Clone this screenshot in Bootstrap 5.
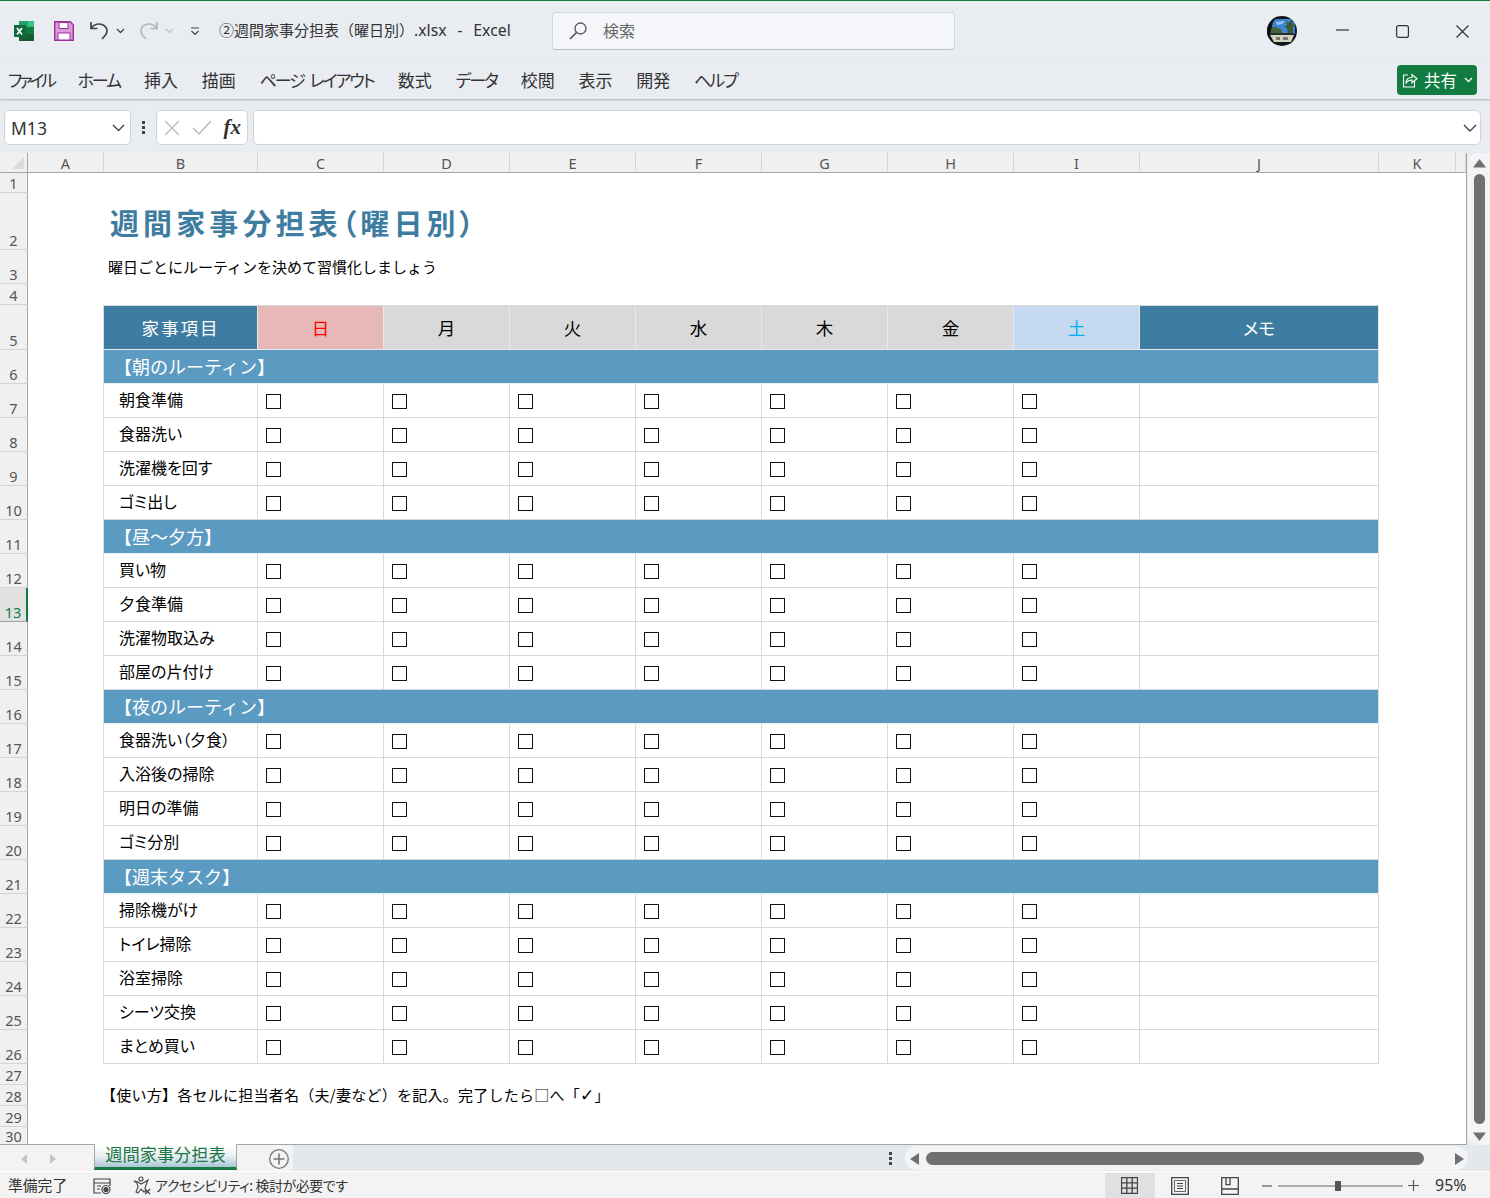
<!DOCTYPE html>
<html lang="ja">
<head>
<meta charset="utf-8">
<title>週間家事分担表</title>
<link href="https://cdn.jsdelivr.net/npm/bootstrap@5.3.0/dist/css/bootstrap.min.css" rel="stylesheet">
<style>
html,body{margin:0;height:100%;overflow:hidden;background:#e9ecf1}
body{font-family:"Noto Sans CJK JP","Noto Sans",sans-serif;color:#222;font-feature-settings:"palt"}
.xl-app{width:1490px;height:1198px;overflow:hidden}
.xl-titlebar{height:61px;border-top:1px solid #107c41;background:#e9ecf1;flex:none}
.xl-qat{width:520px;padding-left:14px}
.xl-save{margin-left:20px}
.xl-undo{margin-left:15px}
.xl-chev{margin-left:6px}
.xl-redo{margin-left:13px}
.xl-cust{margin-left:16px}
.xl-docname{font-size:15px;margin-left:19px;color:#333;white-space:pre;font-feature-settings:normal}
.xl-latin{font-family:"Noto Sans",sans-serif;font-size:15.8px;word-spacing:1.3px}
.xl-search{position:absolute;left:552px;top:11px;width:403px;height:38px;background:#f5f6f9;border:1px solid #d4d7dc;border-bottom-color:#bcbfc4;border-radius:4px;padding-left:15px;color:#666;font-size:16px}
.xl-search span{margin-left:15px;margin-bottom:2px}
.xl-avatar{position:absolute;left:1267px;top:15px}
.xl-winbtn{position:absolute;top:24px}
.xl-min{left:1336px}.xl-max{left:1396px}.xl-close{left:1456px}
.xl-ribbon{height:38px;background:#e9ecf1;box-shadow:0 1px 2px rgba(0,0,0,.25);position:relative;z-index:2;flex:none;padding:0 0 0 8px;font-size:17px;color:#333;gap:23.8px}
.xl-k1{letter-spacing:-3.3px}
.xl-k2{letter-spacing:-2px;word-spacing:4px}
.xl-share{position:absolute;left:1397px;top:4px;width:80px;height:30px;background:#107c41;color:#fff;border-radius:4px;border:0;font-size:16.5px;padding:0 0 0 5px}
.xl-share span{margin:0 7px 0 6px}
.xl-fbar{height:54px;background:#e9ecf1;flex:none;padding:11px 9px 8px 4px}
.xl-box{background:#fff;border:1px solid #d2d4d8;border-radius:5px;height:35px}
.xl-name{width:127px;padding:0 5px 0 6px;font-family:"Noto Sans",sans-serif;font-size:17.5px;color:#333}
.xl-name span{margin-top:2px}
.xl-dots{width:25px}
.xl-fxbox{width:92px;padding:0 6px 0 7px;margin-right:5px}
.xl-okmark{margin-left:12px}
.xl-fx{font-family:"Liberation Serif",serif;font-style:italic;font-weight:700;font-size:21px;color:#333;margin-left:auto}
.xl-finput{flex:1;padding-right:3px}
.xl-main{height:992px;flex:none;position:relative}
.xl-sheetwrap{width:1467px;height:992px;overflow:hidden;border-right:1px solid #a6a6a6;border-bottom:1px solid #a6a6a6;background:#fff}
.xl-sheet{table-layout:fixed;width:1466px;border-collapse:separate;border-spacing:0;color:#000}
.xl-sheet col{width:126px}
.xl-sheet col:nth-child(1){width:28px}
.xl-sheet col:nth-child(2){width:76px}
.xl-sheet col:nth-child(3){width:154px}
.xl-sheet col:nth-child(11){width:239px}
.xl-sheet col:nth-child(12){width:77px}
.xl-sheet col:nth-child(13){width:10px}
.xl-sheet th,.xl-sheet td{padding:0;box-sizing:border-box;font-weight:400;overflow:hidden;white-space:nowrap}
.xl-sheet .xl-ch{background:#f0f0f0;height:20px;border-bottom:1px solid #a6a6a6;border-right:1px solid #d4d4d4;text-align:center;font-family:"Noto Sans",sans-serif;font-size:14.5px;color:#555;line-height:18px;vertical-align:bottom;padding-top:1px}
.xl-rh{background:#f0f0f0;border-right:1px solid #a6a6a6;border-bottom:1px solid #d4d4d4;text-align:center;vertical-align:bottom;font-family:"Noto Sans",sans-serif;font-size:14.5px;color:#555;line-height:17px}
.xl-rh-on{background:#e1e1e1;color:#107c41;border-right:2px solid #107c41;border-bottom:1px solid #a6a6a6}
.xl-sheet .xl-rh-last{overflow:visible;padding-bottom:1px;line-height:16px;border-bottom:0}
.xl-corner{position:relative;border-right:1px solid #a6a6a6!important}
.xl-corner::after{content:"";position:absolute;right:3px;bottom:3px;border-left:12px solid transparent;border-bottom:12px solid #dcdcdc}
.xl-sheet .xl-h1{font-size:29px;font-weight:700;color:#3e7ca1;letter-spacing:4.1px;padding:0 0 6px 6px;line-height:44px;vertical-align:bottom}
.xl-sheet .xl-sub{font-size:15px;padding-left:4px;vertical-align:middle;font-feature-settings:normal}
.xl-edge{border-right:1px solid #d9d9d9}
.xl-sheet .xl-hd{text-align:center;font-size:17.5px;padding-top:1px;border-top:1px solid #d9d9d9;border-right:1px solid #e8e8e8;border-bottom:1px solid #e8e8e8;vertical-align:middle}
.xl-hd-main{background:#3e7ca1;color:#fff;letter-spacing:2px}
.xl-hd-sun{background:#e6b8b7;color:#f00}
.xl-hd-day{background:#d9d9d9}
.xl-hd-sat{background:#c5d9f1;color:#00b0f0}
.xl-hd-memo{background:#3e7ca1;color:#fff}
.xl-sheet .xl-sec{background:#5c9bc1;color:#fff;font-size:18px;padding-left:10px;border-right:1px solid #d9d9d9;border-bottom:1px solid #e8f0f5;font-feature-settings:normal}
.xl-sheet .xl-lab{font-size:16px;padding:0 0 3px 15px;border-right:1px solid #d9d9d9;border-bottom:1px solid #d9d9d9;vertical-align:middle}
.xl-sheet .xl-cell{border-right:1px solid #d9d9d9;border-bottom:1px solid #d9d9d9;padding-left:8px;vertical-align:middle}
.xl-tick{display:block;width:15px;height:15px;border:1.4px solid #111;margin-top:1px}
.xl-sheet .xl-note{font-size:15px;line-height:19px;letter-spacing:.25px;padding:0 0 2px 73px;vertical-align:middle;font-feature-settings:normal}
.xl-ok{font-family:"DejaVu Sans",sans-serif;font-weight:700;font-size:17px;line-height:15px}
.xl-vbar{position:absolute;left:1468px;top:0;width:22px;height:992px;background:#f3f4f6;border-radius:11px 0 0 11px}
.xl-vthumb{position:absolute;left:6px;top:21px;width:11px;height:950px;background:#707070;border-radius:6px}
.xl-tri{position:absolute}
.xl-t-up{left:5px;top:5px}.xl-t-dn{left:5px;top:979px}
.xl-tabbar{height:27px;flex:none;background:#e2e8ec;position:relative;border-bottom:1px solid #fff}
.xl-tableft{position:absolute;left:0;top:0;width:293px;height:26px;background:#f3f3f3}
.xl-t-l{left:21px;top:9px}.xl-t-r{left:50px;top:9px}.xl-t-add{left:269px;top:4px}
.xl-t-dots{left:889px;top:7px}
.xl-tab{position:absolute;left:94px;top:-1px;width:143px;height:26px;border-left:1px solid #a6a6a6;border-right:1px solid #a6a6a6;border-bottom:3px solid #1d7745;background:linear-gradient(#fff 10%,#e6eef2 55%,#a9c6d6);color:#1d7745;font-size:17.2px;line-height:19px;text-align:center;z-index:3}
.xl-hpill{position:absolute;left:905px;top:1px;width:563px;height:24px;background:#f3f4f6;border-radius:12px}
.xl-hthumb{position:absolute;left:21px;top:6px;width:498px;height:13px;background:#707070;border-radius:7px}
.xl-t-hl{left:5px;top:7px}.xl-t-hr{left:550px;top:7px}
.xl-status{height:26px;flex:none;background:#f3f3f3;position:relative;font-size:14.8px;color:#333}
.xl-status>*{position:absolute}
.xl-st-ready{left:8px;top:2px}
.xl-st-macro{left:93px;top:6px}
.xl-st-acc{left:133px;top:4px}
.xl-st-acct{left:155px;top:3px;font-size:13.9px;letter-spacing:-.38px}
.xl-viewon{left:1105px;top:1px;width:50px;height:25px;background:#e0e0e0}
.xl-v1{left:1121px;top:5px}.xl-v2{left:1171px;top:5px}.xl-v3{left:1221px;top:5px}
.xl-zm{left:1262px;top:13px}.xl-zs{left:1278px;top:9px}.xl-zp{left:1408px;top:8px}
.xl-zpct{left:1435px;top:1px;font-family:"Noto Sans",sans-serif;font-size:16px}
</style>
</head>
<body>
<div class="xl-app d-flex flex-column">

  <header class="xl-titlebar d-flex align-items-center position-relative">
    <div class="xl-qat d-flex align-items-center">
      <svg width="20" height="20" viewBox="0 0 20 20"><rect x="5" y="0" width="15" height="6" fill="#33c481"/><rect x="5" y="0" width="9" height="6" fill="#21a366"/><rect x="5" y="6" width="15" height="7" fill="#107c41"/><rect x="5" y="13" width="15" height="7" fill="#185c37"/><rect x="0" y="4" width="12" height="12" rx="1" fill="#0c6b38"/><path d="M3 7l5 6.500M8 7l-5 6.500" stroke="#fff" stroke-width="1.700"/></svg>
      <svg class="xl-save" width="20" height="20" viewBox="0 0 20 20"><path d="M.7.700h15.500l3.100 3.100v15.500H.7z" fill="#dc9cd6" stroke="#9c2f9e" stroke-width="1.400"/><rect x="5" y="1.500" width="9" height="6" fill="#fff" stroke="#9c2f9e"/><rect x="4" y="12" width="12" height="7" fill="#fff" stroke="#9c2f9e"/></svg>
      <svg class="xl-undo" width="21" height="20" viewBox="0 0 21 20" fill="none" stroke="#444" stroke-width="1.700"><path d="M2 1v6.500h6.500M2.200 7.200C4 4.500 6.500 3 10 3c5 0 8 3.200 8 6.800 0 3.200-2 5.500-5 8"/></svg>
      <svg class="xl-chev" width="9" height="6" viewBox="0 0 9 6" fill="none" stroke="#444" stroke-width="1.300"><path d="M1 1l3.500 3.500L8 1"/></svg>
      <svg class="xl-redo" width="21" height="20" viewBox="0 0 21 20" fill="none" stroke="#b4b6ba" stroke-width="1.700"><path d="M19 1v6.500h-6.500M18.800 7.200C17 4.500 14.500 3 11 3 6 3 3 6.200 3 9.800c0 3.200 2 5.500 5 8"/></svg>
      <svg class="xl-chev" width="9" height="6" viewBox="0 0 9 6" fill="none" stroke="#c0c2c6" stroke-width="1.300"><path d="M1 1l3.500 3.500L8 1"/></svg>
      <svg class="xl-cust" width="10" height="9" viewBox="0 0 10 9" fill="none" stroke="#444" stroke-width="1.200"><path d="M1 1h8M1.500 4l3.500 3.500L8.500 4"/></svg>
      <span class="xl-docname">②週間家事分担表（曜日別）<span class="xl-latin">.xlsx  -  Excel</span></span>
    </div>
    <div class="xl-search d-flex align-items-center">
      <svg width="20" height="20" viewBox="0 0 20 20" fill="none" stroke="#555" stroke-width="1.300"><circle cx="12.500" cy="7.500" r="5.500"/><path d="M8.500 11.500L2 18" stroke-width="1.700"/></svg>
      <span>検索</span>
    </div>
    <svg class="xl-avatar" width="30" height="30" viewBox="0 0 30 30"><defs><clipPath id="av"><circle cx="15" cy="15" r="15"/></clipPath></defs><g clip-path="url(#av)"><rect width="30" height="30" fill="#10171a"/><path d="M4 3h24v15H4z" fill="#3a86d8"/><path d="M9 6l9-1-3 3-5 1z" fill="#9cc4ea"/><path d="M19 4l2 3 4-4 1 5 4 1-4 2v8h-5l-1-7-3-1 3-2z" fill="#3c5a3a"/><path d="M0 11h9l6 3v4H0z" fill="#46633f"/><path d="M3 17h24v2H3z" fill="#26302c"/><path d="M3 19h24l-3 7H7z" fill="#d5d1bf"/><path d="M9 21h4v3H9zM16 21h5v3h-5z" fill="#7c7a6c"/><path d="M0 0h11L6 6 3 18 0 24zM30 22l-3 8H20z" fill="#0c1012"/></g></svg>
    <svg class="xl-winbtn xl-min" width="13" height="12" viewBox="0 0 13 12"><path d="M0 5h13" stroke="#333" stroke-width="1.200"/></svg>
    <svg class="xl-winbtn xl-max" width="13" height="13" viewBox="0 0 13 13"><rect x=".6" y=".6" width="11.800" height="11.800" rx="2" fill="none" stroke="#333" stroke-width="1.200"/></svg>
    <svg class="xl-winbtn xl-close" width="13" height="13" viewBox="0 0 13 13"><path d="M.5.500l12 12M12.500.500l-12 12" stroke="#333" stroke-width="1.200"/></svg>
  </header>

  <nav class="xl-ribbon d-flex align-items-center">
    <span class="xl-k1">ファイル</span><span class="xl-k2">ホーム</span><span>挿入</span><span>描画</span><span class="xl-k2">ページ レイアウト</span><span>数式</span><span class="xl-k2">データ</span><span>校閲</span><span>表示</span><span>開発</span><span class="xl-k2">ヘルプ</span>
    <button class="xl-share d-flex align-items-center" type="button">
      <svg width="16" height="16" viewBox="0 0 16 16" fill="none" stroke="#fff" stroke-width="1.100"><path d="M6 3H1.500v12h11V9"/><path d="M4 11c0-4 3-5.500 6-5.500V2.500l5 4.300-5 4V8c-2.500 0-4.500.800-6 3z"/></svg>
      <span>共有</span>
      <svg width="9" height="6" viewBox="0 0 9 6" fill="none" stroke="#fff" stroke-width="1.300"><path d="M1 1l3.500 3.500L8 1"/></svg>
    </button>
  </nav>

  <div class="xl-fbar d-flex align-items-center">
    <div class="xl-box xl-name d-flex align-items-center justify-content-between"><span>M13</span>
      <svg width="13" height="8" viewBox="0 0 13 8" fill="none" stroke="#444" stroke-width="1.400"><path d="M1 1l5.500 5.500L12 1"/></svg></div>
    <div class="xl-dots d-flex flex-column align-items-center"><svg width="3" height="13" viewBox="0 0 3 13"><path d="M0 0h3v3H0zM0 5h3v3H0zM0 10h3v3H0z" fill="#444"/></svg></div>
    <div class="xl-box xl-fxbox d-flex align-items-center">
      <svg width="16" height="16" viewBox="0 0 16 16"><path d="M1 1l14 14M15 1L1 15" stroke="#b8b8b8" stroke-width="1.400"/></svg>
      <svg class="xl-okmark" width="20" height="16" viewBox="0 0 20 16" fill="none"><path d="M1 8l6 6L19 1" stroke="#b8b8b8" stroke-width="1.500"/></svg>
      <span class="xl-fx">fx</span>
    </div>
    <div class="xl-box xl-finput d-flex align-items-center justify-content-end"><svg width="14" height="8" viewBox="0 0 14 8" fill="none" stroke="#444" stroke-width="1.400"><path d="M1 1l6 6 6-6"/></svg></div>
  </div>

  <main class="xl-main">
    <div class="xl-sheetwrap"><table class="xl-sheet" id="sheet">
      <colgroup><col><col><col><col><col><col><col><col><col><col><col><col><col></colgroup>
      <tbody id="rows"></tbody>
    </table></div>
    <div class="xl-vbar">
      <svg class="xl-tri xl-t-up" width="13" height="10" viewBox="0 0 13 10"><path d="M6.500 1L13 9.500H0z" fill="#707070"/></svg>
      <div class="xl-vthumb"></div>
      <svg class="xl-tri xl-t-dn" width="13" height="10" viewBox="0 0 13 10"><path d="M6.500 9L13 .500H0z" fill="#707070"/></svg>
    </div>
  </main>

  <div class="xl-tabbar">
    <div class="xl-tableft">
      <svg class="xl-tri xl-t-l" width="6" height="10" viewBox="0 0 6 10"><path d="M6 0v10L0 5z" fill="#c4c4c4"/></svg>
      <svg class="xl-tri xl-t-r" width="6" height="10" viewBox="0 0 6 10"><path d="M0 0v10l6-5z" fill="#c4c4c4"/></svg>
      <svg class="xl-tri xl-t-add" width="20" height="20" viewBox="0 0 20 20" fill="none" stroke="#777" stroke-width="1.300"><circle cx="10" cy="10" r="9.300"/><path d="M10 4.500v11M4.500 10h11" stroke-width="1.600"/></svg>
    </div>
    <div class="xl-tab">週間家事分担表</div>
    <svg class="xl-tri xl-t-dots" width="3" height="13" viewBox="0 0 3 13"><path d="M0 0h3v3H0zM0 5h3v3H0zM0 10h3v3H0z" fill="#444"/></svg>
    <div class="xl-hpill">
      <svg class="xl-tri xl-t-hl" width="9" height="12" viewBox="0 0 9 12"><path d="M9 0v12L0 6z" fill="#707070"/></svg>
      <div class="xl-hthumb"></div>
      <svg class="xl-tri xl-t-hr" width="9" height="12" viewBox="0 0 9 12"><path d="M0 0v12l9-6z" fill="#707070"/></svg>
    </div>
  </div>

  <footer class="xl-status">
    <span class="xl-st-ready">準備完了</span>
    <svg class="xl-st-macro" width="18" height="16" viewBox="0 0 18 16" fill="none" stroke="#444" stroke-width="1.200"><path d="M8 15H1V1h16v7M1 5h16M4 8h4M4 11h3"/><circle cx="13" cy="11.500" r="4" fill="#f3f3f3"/><circle cx="13" cy="11.500" r="2" fill="#444"/></svg>
    <svg class="xl-st-acc" width="19" height="19" viewBox="0 0 19 19" fill="none" stroke="#444" stroke-width="1.100"><circle cx="8" cy="3" r="2"/><path d="M1 5l4 1 3 2 4-2 3-2-2 5-1 3 1 3-2 1-3-3-3 4-2-1 2-5-1-4z"/><path d="M12 13l5 5M17 13l-5 5" stroke-width="1.300"/></svg>
    <span class="xl-st-acct">アクセシビリティ: 検討が必要です</span>
    <div class="xl-viewon"></div>
    <svg class="xl-v1" width="17" height="17" viewBox="0 0 17 17"><path d="M.5.500h16v16H.5zM5.800.500v16M11.200.500v16M.5 5.800h16M.5 11.200h16" fill="none" stroke="#444" stroke-width="1.300"/></svg>
    <svg class="xl-v2" width="18" height="18" viewBox="0 0 18 18" fill="none" stroke="#444"><path d="M.7.700h16.600v16.600H.7z" stroke-width="1.300"/><path d="M3.500 3.500h11v11h-11z" stroke-width=".8"/><path d="M6 6.500h6M6 9h6M6 11.500h6" stroke-width="1.100"/></svg>
    <svg class="xl-v3" width="18" height="18" viewBox="0 0 18 18" fill="none" stroke="#444" stroke-width="1.300"><path d="M.7.700h16.600v16.600H.7zM.7 12h16.600M5 .7v7h4v-7"/></svg>
    <svg class="xl-zm" width="10" height="2" viewBox="0 0 10 2"><path d="M0 1h10" stroke="#555" stroke-width="1.200"/></svg>
    <svg class="xl-zs" width="125" height="10" viewBox="0 0 125 10"><path d="M0 5h125" stroke="#666"/><rect x="57" y="0" width="6" height="10" fill="#555"/></svg>
    <svg class="xl-zp" width="11" height="11" viewBox="0 0 11 11"><path d="M0 5.500h11M5.500 0v11" stroke="#555" stroke-width="1.200"/></svg>
    <span class="xl-zpct">95%</span>
  </footer>
</div>

<script>
(function(){
  var letters=['A','B','C','D','E','F','G','H','I','J','K',''];
  var days=[['xl-hd-sun','日'],['xl-hd-day','月'],['xl-hd-day','火'],['xl-hd-day','水'],['xl-hd-day','木'],['xl-hd-day','金'],['xl-hd-sat','土']];
  var groups=[['【朝のルーティン】',['朝食準備','食器洗い','洗濯機を回す','ゴミ出し']],
    ['【昼～夕方】',['買い物','夕食準備','洗濯物取込み','部屋の片付け']],
    ['【夜のルーティン】',['食器洗い（夕食）','入浴後の掃除','明日の準備','ゴミ分別']],
    ['【週末タスク】',['掃除機がけ','トイレ掃除','浴室掃除','シーツ交換','まとめ買い']]];
  var n=0,h='';
  function row(height,cells){n++;h+='<tr style="height:'+height+'px"><th class="xl-rh'+(n===13?' xl-rh-on':'')+(n===30?' xl-rh-last':'')+'">'+n+'</th>'+cells+'</tr>';}
  h+='<tr style="height:20px"><th class="xl-ch xl-corner"></th>'+letters.map(function(l){return '<th class="xl-ch">'+l+'</th>';}).join('')+'</tr>';
  row(20,'<td colspan="12"></td>');
  row(57,'<td></td><td colspan="11" class="xl-h1">週間家事分担表（曜日別）</td>');
  row(34,'<td></td><td colspan="11" class="xl-sub">曜日ごとにルーティンを決めて習慣化しましょう</td>');
  row(21,'<td colspan="12"></td>');
  row(45,'<td class="xl-edge"></td><td class="xl-hd xl-hd-main">家事項目</td>'+days.map(function(d){return '<td class="xl-hd '+d[0]+'">'+d[1]+'</td>';}).join('')+'<td class="xl-hd xl-hd-memo">メモ</td><td colspan="2"></td>');
  var ticks='';for(var i=0;i<7;i++)ticks+='<td class="xl-cell"><span class="xl-tick"></span></td>';
  groups.forEach(function(g){
    row(34,'<td class="xl-edge"></td><td colspan="9" class="xl-sec">'+g[0]+'</td><td colspan="2"></td>');
    g[1].forEach(function(t){row(34,'<td class="xl-edge"></td><td class="xl-lab">'+t+'</td>'+ticks+'<td class="xl-cell"></td><td colspan="2"></td>');});
  });
  row(21,'<td colspan="12"></td>');
  row(21,'<td colspan="12" class="xl-note">【使い方】各セルに担当者名（夫/妻など）を記入。完了したら□へ「<span class="xl-ok">✓</span>」</td>');
  row(21,'<td colspan="12"></td>');
  row(18,'<td colspan="12"></td>');
  document.getElementById('rows').innerHTML=h;
})();
</script>
<script src="https://cdn.jsdelivr.net/npm/bootstrap@5.3.0/dist/js/bootstrap.bundle.min.js"></script>
</body>
</html>
